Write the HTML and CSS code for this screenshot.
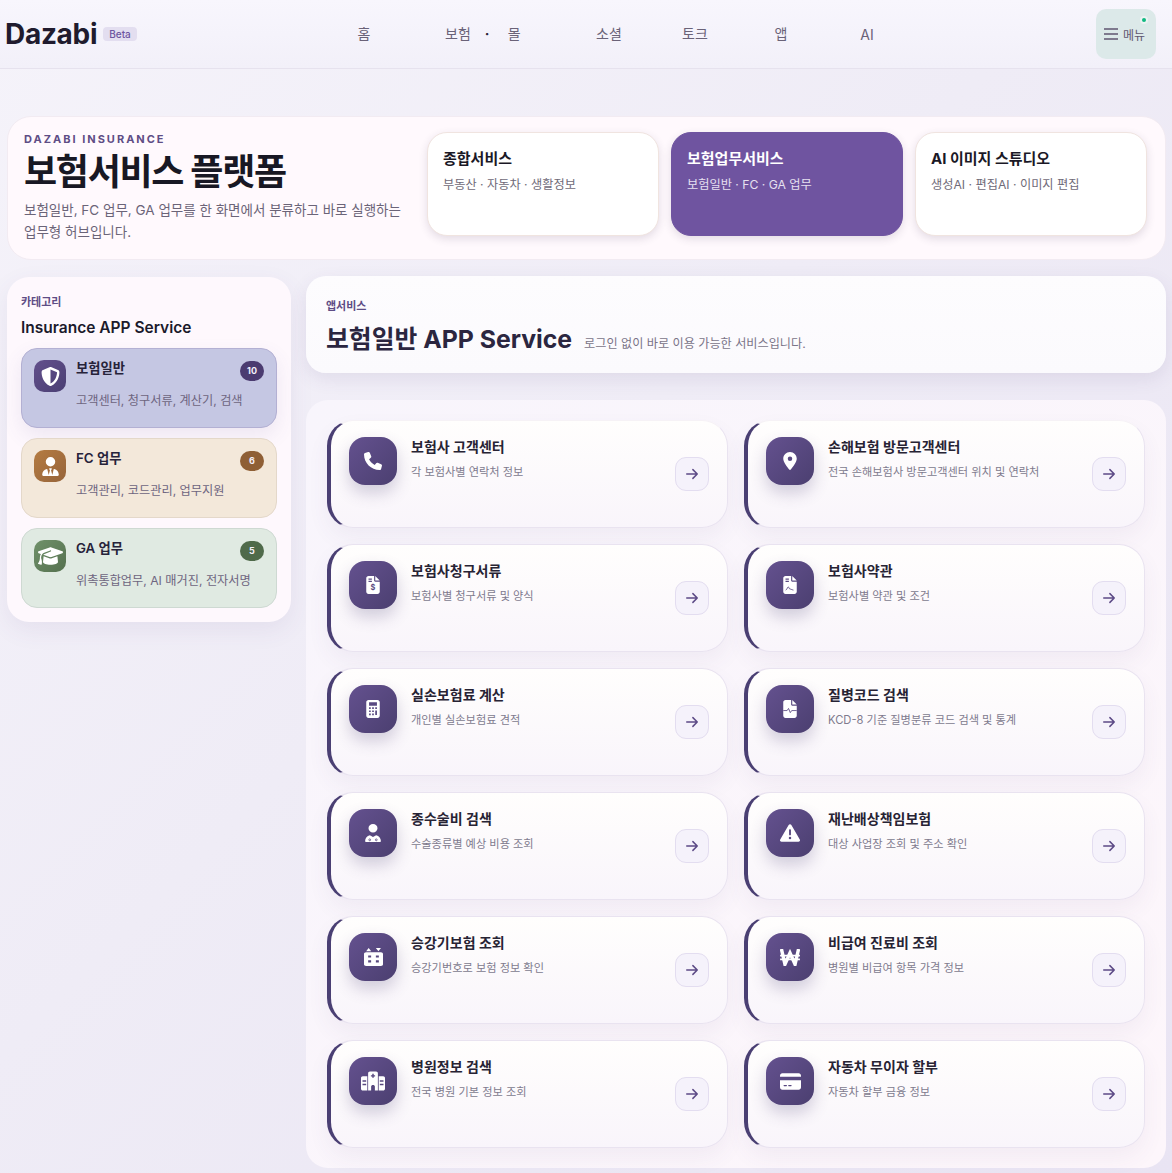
FILE: index.html
```html
<!DOCTYPE html>
<html lang="ko">

<head>
    <meta charset="UTF-8">
    <meta name="viewport" content="width=device-width, initial-scale=1.0">
    <title>Dazabi 보험서비스 플랫폼</title>
    <link rel="stylesheet" href="styles.css">
</head>

<body>
    <svg class="sprite" aria-hidden="true">
        <symbol id="arrow" viewBox="0 0 16 16">
            <path d="M2 8h12M9 3l5 5-5 5" fill="none" stroke="currentColor" stroke-width="1.7" stroke-linecap="round" stroke-linejoin="round"/>
        </symbol>
    </svg>

    <div class="header">
        <div class="brand">
            <span class="logo">Dazabi</span>
            <span class="beta">Beta</span>
        </div>
        <div class="nav">
            <a href="#">홈</a>
            <a href="#" class="nav-double"><span>보험</span><b>·</b><span>몰</span></a>
            <a href="#">소셜</a>
            <a href="#">토크</a>
            <a href="#">앱</a>
            <a href="#" class="nav-ai">AI</a>
        </div>
        <button class="menu-btn">
            <i class="dot"></i>
            <svg class="burger" viewBox="0 0 14 12"><path d="M0 1h14M0 6h14M0 11h14" stroke="currentColor" stroke-width="1.6"/></svg>
            <span>메뉴</span>
        </button>
    </div>

    <div class="page">
        <div class="hero">
            <div class="hero-text">
                <div class="eyebrow">DAZABI INSURANCE</div>
                <h1>보험서비스 플랫폼</h1>
                <p>보험일반, FC 업무, GA 업무를 한 화면에서 분류하고 바로 실행하는 업무형 허브입니다.</p>
            </div>
            <div class="hero-cards">
                <a href="#" class="hero-card">
                    <h3>종합서비스</h3>
                    <p>부동산 · 자동차 · 생활정보</p>
                </a>
                <a href="#" class="hero-card active">
                    <h3>보험업무서비스</h3>
                    <p>보험일반 · FC · GA 업무</p>
                </a>
                <a href="#" class="hero-card">
                    <h3>AI 이미지 스튜디오</h3>
                    <p>생성AI · 편집AI · 이미지 편집</p>
                </a>
            </div>
        </div>

        <div class="content">
            <div class="sidebar">
                <div class="side-label">카테고리</div>
                <h2>Insurance APP Service</h2>

                <a href="#" class="cat cat-blue">
                    <div class="cat-icon">
                        <svg class="ic-side" viewBox="0 0 512 512"><path d="M256 0c4.6 0 9.2 1 13.4 2.9L457.7 82.8c22 9.3 38.4 31 38.3 57.2c-.5 99.2-41.3 280.7-213.6 363.2c-16.7 8-36.1 8-52.8 0C57.3 420.7 16.5 239.2 16 140c-.1-26.2 16.3-47.9 38.3-57.2L242.7 2.9C246.8 1 251.4 0 256 0zm0 66.8V444.8C394 378 431.1 230.1 432 141.4L256 66.8z"/></svg>
                    </div>
                    <div class="cat-body">
                        <div class="cat-top"><strong>보험일반</strong><span class="count">10</span></div>
                        <p>고객센터, 청구서류, 계산기, 검색</p>
                    </div>
                </a>
                <a href="#" class="cat cat-sand">
                    <div class="cat-icon">
                        <svg class="ic-side" viewBox="0 0 448 512"><path d="M96 128a128 128 0 1 0 256 0A128 128 0 1 0 96 128zm94.500 200.200l18.600 31L175.800 483.100l-36-146.900c-2-8.100-9.800-13.400-17.900-11.300C51.900 342.400 0 405.800 0 481.300c0 17 13.800 30.700 30.700 30.700H417.300c17 0 30.700-13.800 30.700-30.700c0-75.500-51.900-138.900-121.900-156.400c-8.100-2-15.900 3.300-17.900 11.300l-36 146.900L238.900 359.200l18.600-31c6.400-10.700-1.300-24.200-13.700-24.200H204.300c-12.400 0-20.100 13.600-13.700 24.200z"/></svg>
                    </div>
                    <div class="cat-body">
                        <div class="cat-top"><strong>FC 업무</strong><span class="count">6</span></div>
                        <p>고객관리, 코드관리, 업무지원</p>
                    </div>
                </a>
                <a href="#" class="cat cat-green">
                    <div class="cat-icon">
                        <svg class="ic-cap" viewBox="0 0 640 512"><path d="M320 32c-8.100 0-16.100 1.400-23.700 4.100L15.800 137.400C6.300 140.900 0 149.900 0 160s6.300 19.100 15.800 22.600l57.900 20.900C57.300 229.300 48 259.800 48 291.900v28.100c0 28.400-10.800 57.700-22.300 80.800c-6.500 13-13.900 25.800-22.500 37.600C0 442.700-.9 448.300 .9 453.400s6 8.900 11.200 10.200l64 16c4.200 1.100 8.700 .3 12.400-2s6.300-6.100 7.100-10.400c8.600-42.800 4.300-81.200-2.100-108.700C90.300 344.300 86 329.800 80 316.500V291.900c0-30.200 10.200-58.700 27.900-81.500c12.900-15.500 29.600-28 49.200-35.700l157-61.700c8.200-3.200 17.500 .8 20.700 9s-.8 17.500-9 20.700l-157 61.700c-12.400 4.900-23.300 12.400-32.200 21.600l159.600 57.600c7.600 2.700 15.600 4.100 23.700 4.100s16.100-1.400 23.700-4.100L624.200 182.600c9.500-3.400 15.800-12.500 15.800-22.600s-6.300-19.100-15.800-22.600L343.700 36.100C336.100 33.400 328.100 32 320 32zM128 408c0 35.300 86 72 192 72s192-36.700 192-72L496.700 262.600 354.500 314c-11.100 4-22.800 6-34.500 6s-23.500-2-34.500-6L143.300 262.600 128 408z"/></svg>
                    </div>
                    <div class="cat-body">
                        <div class="cat-top"><strong>GA 업무</strong><span class="count">5</span></div>
                        <p>위촉통합업무, AI 매거진, 전자서명</p>
                    </div>
                </a>
            </div>

            <div class="main">
                <div class="main-head">
                    <div class="side-label">앱서비스</div>
                    <div class="main-title">
                        <h2>보험일반 APP Service</h2>
                        <span>로그인 없이 바로 이용 가능한 서비스입니다.</span>
                    </div>
                </div>

                <div class="app-grid">
                    <a href="#" class="app">
                        <div class="app-icon"><svg class="ic" viewBox="0 0 512 512"><path d="M164.900 24.600c-7.700-18.600-28-28.500-47.400-23.200l-88 24C12.100 30.200 0 46 0 64C0 311.400 200.600 512 448 512c18 0 33.800-12.100 38.600-29.500l24-88c5.300-19.400-4.600-39.700-23.200-47.400l-96-40c-16.300-6.800-35.200-2.100-46.300 11.600L304.700 368C234.300 334.700 177.300 277.700 144 207.300L193.300 167c13.700-11.200 18.400-30 11.600-46.300l-40-96z"/></svg></div>
                        <div class="app-text"><h3>보험사 고객센터</h3><p>각 보험사별 연락처 정보</p></div>
                        <span class="go"><svg><use href="#arrow"/></svg></span>
                    </a>
                    <a href="#" class="app">
                        <div class="app-icon"><svg class="ic" viewBox="0 0 384 512"><path d="M215.700 499.200C267 435 384 279.400 384 192C384 86 298 0 192 0S0 86 0 192c0 87.400 117 243 168.300 307.200c12.300 15.300 35.100 15.300 47.400 0zM192 128a64 64 0 1 1 0 128 64 64 0 1 1 0-128z"/></svg></div>
                        <div class="app-text"><h3>손해보험 방문고객센터</h3><p>전국 손해보험사 방문고객센터 위치 및 연락처</p></div>
                        <span class="go"><svg><use href="#arrow"/></svg></span>
                    </a>
                    <a href="#" class="app">
                        <div class="app-icon"><svg class="ic" viewBox="0 0 384 512"><path d="M64 0C28.700 0 0 28.700 0 64V448c0 35.300 28.700 64 64 64H320c35.300 0 64-28.700 64-64V160H256c-17.700 0-32-14.300-32-32V0H64zM256 0V128H384L256 0z"/><path d="M64 72h96v32H64zM64 136h96v32H64z" fill="#5b4a82"/><text x="192" y="410" text-anchor="middle" class="ic-text">$</text></svg></div>
                        <div class="app-text"><h3>보험사청구서류</h3><p>보험사별 청구서류 및 양식</p></div>
                        <span class="go"><svg><use href="#arrow"/></svg></span>
                    </a>
                    <a href="#" class="app">
                        <div class="app-icon"><svg class="ic" viewBox="0 0 384 512"><path d="M64 0C28.700 0 0 28.700 0 64V448c0 35.300 28.700 64 64 64H320c35.300 0 64-28.700 64-64V160H256c-17.700 0-32-14.300-32-32V0H64zM256 0V128H384L256 0z"/><path d="M64 72h96v32H64zM64 136h96v32H64z" fill="#5b4a82"/><path d="M70 400c40-10 50-90 70-90s30 60 50 60 50 20 100 30" fill="none" stroke="#5b4a82" stroke-width="26"/></svg></div>
                        <div class="app-text"><h3>보험사약관</h3><p>보험사별 약관 및 조건</p></div>
                        <span class="go"><svg><use href="#arrow"/></svg></span>
                    </a>
                    <a href="#" class="app">
                        <div class="app-icon"><svg class="ic" viewBox="0 0 384 512"><path fill-rule="evenodd" d="M64 0H320c35.300 0 64 28.700 64 64V448c0 35.300-28.700 64-64 64H64c-35.300 0-64-28.700-64-64V64C0 28.700 28.700 0 64 0zM80 64v96H304V64H80zM80 208v48h48v-48H80zm88 0v48h48v-48h-48zm88 0v48h48v-48h-48zM80 296v48h48v-48H80zm88 0v48h48v-48h-48zm88 0v128h48V296h-48zM80 384v48h48v-48H80zm88 0v48h48v-48h-48z"/></svg></div>
                        <div class="app-text"><h3>실손보험료 계산</h3><p>개인별 실손보험료 견적</p></div>
                        <span class="go"><svg><use href="#arrow"/></svg></span>
                    </a>
                    <a href="#" class="app">
                        <div class="app-icon"><svg class="ic" viewBox="0 0 384 512"><path d="M64 0C28.700 0 0 28.700 0 64V448c0 35.300 28.700 64 64 64H320c35.300 0 64-28.700 64-64V160H256c-17.700 0-32-14.300-32-32V0H64zM256 0V128H384L256 0z"/><path d="M0 300h110l40-60 50 120 40-60h144" fill="none" stroke="#5b4a82" stroke-width="24"/></svg></div>
                        <div class="app-text"><h3>질병코드 검색</h3><p>KCD-8 기준 질병분류 코드 검색 및 통계</p></div>
                        <span class="go"><svg><use href="#arrow"/></svg></span>
                    </a>
                    <a href="#" class="app">
                        <div class="app-icon"><svg class="ic" viewBox="0 0 448 512"><path d="M96 120a128 120 0 1 0 256 0A128 120 0 1 0 96 120zM30 512c-17 0-30-14-30-31 0-80 58-146 134-160l90 50 90-50c76 14 134 80 134 160 0 17-13 31-30 31z"/><circle cx="130" cy="450" r="26" fill="none" stroke="#5b4a82" stroke-width="22"/><circle cx="318" cy="450" r="26" fill="none" stroke="#5b4a82" stroke-width="22"/></svg></div>
                        <div class="app-text"><h3>종수술비 검색</h3><p>수술종류별 예상 비용 조회</p></div>
                        <span class="go"><svg><use href="#arrow"/></svg></span>
                    </a>
                    <a href="#" class="app">
                        <div class="app-icon"><svg class="ic-warn" viewBox="0 0 512 512"><path d="M256 32c14.200 0 27.300 7.500 34.500 19.800l216 368c7.300 12.400 7.300 27.700 .2 40.100S486.300 480 472 480H40c-14.300 0-27.600-7.700-34.700-20.100s-7-27.800 .2-40.100l216-368C228.700 39.500 241.800 32 256 32zm0 128c-13.300 0-24 10.700-24 24V296c0 13.300 10.700 24 24 24s24-10.700 24-24V184c0-13.300-10.700-24-24-24zm32 224a32 32 0 1 0 -64 0 32 32 0 1 0 64 0z"/></svg></div>
                        <div class="app-text"><h3>재난배상책임보험</h3><p>대상 사업장 조회 및 주소 확인</p></div>
                        <span class="go"><svg><use href="#arrow"/></svg></span>
                    </a>
                    <a href="#" class="app">
                        <div class="app-icon"><svg class="ic-lift" viewBox="0 0 448 512" preserveAspectRatio="none"><path d="M110 0l60 90H50zM280 0h120l-60 90z"/><path fill-rule="evenodd" d="M48 120h352c27 0 48 21 48 48v296c0 27-21 48-48 48H48c-27 0-48-21-48-48V168c0-27 21-48 48-48zm50 90v60h70v-60H98zm182 0v60h70v-60h-70zM98 350v60h70v-60H98zm182 0v60h70v-60h-70z"/></svg></div>
                        <div class="app-text"><h3>승강기보험 조회</h3><p>승강기번호로 보험 정보 확인</p></div>
                        <span class="go"><svg><use href="#arrow"/></svg></span>
                    </a>
                    <a href="#" class="app">
                        <div class="app-icon"><svg class="ic-won" viewBox="0 0 448 384"><path d="M30 0l80 345L224 90l114 255L418 0" fill="none" stroke="currentColor" stroke-width="78"/><path d="M0 150h448M0 235h448" fill="none" stroke="currentColor" stroke-width="36"/></svg></div>
                        <div class="app-text"><h3>비급여 진료비 조회</h3><p>병원별 비급여 항목 가격 정보</p></div>
                        <span class="go"><svg><use href="#arrow"/></svg></span>
                    </a>
                    <a href="#" class="app">
                        <div class="app-icon"><svg class="ic-hosp" viewBox="0 0 640 512"><path fill-rule="evenodd" d="M190 48c0-26 22-48 48-48h164c26 0 48 22 48 48v464H370V400c0-22-22-40-50-40s-50 18-50 40v112H190V48zM300 64v36h-36v36h36v36h40v-36h36v-36h-36V64h-40zM0 176c0-26 22-48 48-48h120v384H48c-26 0-48-22-48-48V176zm40 60v40h98v-40H40zm0 90v40h98v-40H40zM472 128h120c26 0 48 22 48 48v288c0 26-22 48-48 48H472V128zm30 108v40h98v-40h-98zm0 90v40h98v-40h-98z"/></svg></div>
                        <div class="app-text"><h3>병원정보 검색</h3><p>전국 병원 기본 정보 조회</p></div>
                        <span class="go"><svg><use href="#arrow"/></svg></span>
                    </a>
                    <a href="#" class="app">
                        <div class="app-icon"><svg class="ic-wide" viewBox="0 0 576 512"><path fill-rule="evenodd" d="M64 32C28.700 32 0 60.700 0 96v32H576V96c0-35.300-28.700-64-64-64H64zM576 224H0V416c0 35.300 28.700 64 64 64H512c35.300 0 64-28.700 64-64V224zM112 352h64c8.800 0 16 7.200 16 16s-7.200 16-16 16H112c-8.800 0-16-7.200-16-16s7.200-16 16-16zm112 16c0-8.800 7.200-16 16-16h64c8.800 0 16 7.200 16 16s-7.200 16-16 16H240c-8.800 0-16-7.200-16-16z"/></svg></div>
                        <div class="app-text"><h3>자동차 무이자 할부</h3><p>자동차 할부 금융 정보</p></div>
                        <span class="go"><svg><use href="#arrow"/></svg></span>
                    </a>
                </div>
            </div>
        </div>
    </div>
</body>

</html>
```

FILE: styles.css
```css
/* Reset */
body,
h1,
h2,
h3,
p {
    margin: 0;
    padding: 0;
}

* {
    box-sizing: border-box;
}

body {
    font-family: Inter, 'Noto Sans CJK KR', sans-serif;
    color: #1e1a2e;
    background: linear-gradient(135deg, #f5f3fa 0%, #efecf6 45%, #e9e4f3 100%);
    min-height: 1173px;
}

a {
    color: inherit;
    text-decoration: none;
}

.sprite {
    display: none;
}

/* Header */
.header {
    display: flex;
    align-items: center;
    height: 69px;
    padding: 0 16px 0 5px;
    background: linear-gradient(180deg, #f8f6fd, #f2f0f9);
    border-bottom: 1px solid #e6e2ee;
}

.brand {
    display: flex;
    align-items: center;
    gap: 6px;
    width: 316px;
}

.logo {
    font-size: 28px;
    font-weight: 700;
    letter-spacing: -0.3px;
    color: #201b2e;
}

.beta {
    padding: 1px 6px;
    font-size: 10px;
    font-weight: 500;
    line-height: 12px;
    color: #6d55a0;
    background: #e3def0;
    border-radius: 4px;
}

.nav {
    display: flex;
    align-items: center;
    padding-bottom: 2px;
    font-size: 14px;
    color: #6a6278;
}

.nav a {
    width: 86px;
    text-align: center;
}

.nav .nav-double {
    display: flex;
    gap: 14px;
    width: 159px;
    padding-left: 38px;
    text-align: left;
}

.nav .nav-ai {
    padding-top: 2px;
}

.nav-double b {
    width: 6px;
    margin-right: 3px;
    padding-top: 2px;
    color: #2a2438;
}

.menu-btn {
    position: relative;
    display: flex;
    align-items: center;
    gap: 5px;
    width: 60px;
    height: 50px;
    margin-left: auto;
    padding: 0 0 0 8px;
    font-family: inherit;
    font-size: 12px;
    color: #5f5670;
    background: #dce9e9;
    border: 0;
    border-radius: 10px;
}

.burger {
    width: 14px;
    height: 12px;
}

.dot {
    position: absolute;
    top: 9px;
    right: 10px;
    width: 4px;
    height: 4px;
    background: #10b981;
    border-radius: 50%;
    box-shadow: 0 0 0 2px rgba(255, 255, 255, 0.45);
}

/* Page */
.page {
    padding: 47px 6px 5px 7px;
}

.hero {
    display: flex;
    justify-content: space-between;
    height: 144px;
    padding: 15px 18px 0 16px;
    background: #fff9fd;
    border: 1px solid #f2ebf2;
    border-radius: 24px;
}

.hero-text {
    width: 386px;
}

.eyebrow {
    font-size: 11px;
    font-weight: 700;
    line-height: 14px;
    letter-spacing: 2px;
    color: #5e4d85;
}

.hero-text h1 {
    margin-top: 2px;
    font-size: 36px;
    font-weight: 700;
    line-height: 48px;
    letter-spacing: -1.3px;
    color: #181824;
}

.hero-text p {
    margin-top: 4px;
    font-size: 13.5px;
    line-height: 21.5px;
    color: #6b6478;
}

.hero-cards {
    display: flex;
    gap: 12px;
}

.hero-card {
    width: 232px;
    height: 104px;
    padding: 16px 15px;
    background: #fff;
    border: 1px solid #f0e4e0;
    border-radius: 20px;
    box-shadow: 0 3px 8px rgba(60, 40, 80, 0.14);
}

.hero-card h3 {
    font-size: 15px;
    font-weight: 700;
    line-height: 20px;
    color: #1a1826;
}

.hero-card p {
    margin-top: 8px;
    font-size: 12.2px;
    line-height: 16px;
    color: #6f6a78;
}

.hero-card.active {
    background: #6f54a0;
    border-color: #6f54a0;
}

.hero-card.active h3 {
    color: #fff;
}

.hero-card.active p {
    color: #e6e0f0;
}

/* Content */
.content {
    display: grid;
    grid-template-columns: 284px 860px;
    gap: 15px;
    align-items: start;
    margin-top: 16px;
}

.sidebar {
    margin-top: 1px;
    padding: 17px 14px 14px;
    background: #fef8fd;
    border-radius: 22px;
    box-shadow: 0 8px 24px rgba(90, 70, 130, 0.08);
}

.side-label {
    font-size: 11px;
    font-weight: 600;
    line-height: 16px;
    color: #5e4d85;
}

.sidebar h2 {
    margin-top: 8px;
    font-size: 15.5px;
    font-weight: 600;
    line-height: 20px;
    color: #1b1a2b;
}

.cat {
    display: flex;
    gap: 10px;
    height: 80px;
    margin-top: 10px;
    padding: 11px 12px;
    border: 1px solid;
    border-radius: 16px;
}

.cat-blue {
    background: #c5c7e3;
    border-color: #b3b0d3;
    box-shadow: 0 8px 20px rgba(90, 80, 150, 0.1);
}

.cat-sand {
    background: #f3e8da;
    border-color: #e4d8ca;
}

.cat-green {
    background: #e0eae2;
    border-color: #ced9d2;
}

.cat-icon {
    display: flex;
    flex: none;
    align-items: center;
    justify-content: center;
    width: 32px;
    height: 32px;
    fill: #fff;
    border-radius: 10px;
}

.cat-blue .cat-icon {
    background: linear-gradient(135deg, #63508c, #4a3f73);
}

.cat-sand .cat-icon {
    background: linear-gradient(135deg, #b57c42, #96643a);
}

.cat-green .cat-icon {
    background: linear-gradient(135deg, #70916a, #55714f);
}

.ic-side {
    width: 19px;
    height: 19px;
}

.ic-cap {
    width: 25px;
    height: 20px;
}

.cat-body {
    flex: 1;
}

.cat-top {
    display: flex;
    align-items: flex-start;
    justify-content: space-between;
    height: 30px;
}

.cat-top strong {
    font-size: 13.3px;
    font-weight: 600;
    line-height: 17px;
    color: #27233a;
}

.count {
    width: 24px;
    height: 20px;
    margin-top: 1px;
    font-size: 9px;
    font-weight: 700;
    line-height: 20px;
    text-align: center;
    color: #f5f0fa;
    background: #4b3b70;
    border-radius: 10px;
}

.cat-sand .count {
    background: #8f5f35;
}

.cat-green .count {
    background: #4f6a4a;
}

.cat-body p {
    margin-top: 3px;
    font-size: 12.2px;
    line-height: 16px;
    color: #6e6580;
}

.main-head {
    height: 97px;
    padding: 22px 20px;
    background: linear-gradient(180deg, #fdfcfe, #fbfafd);
    border-radius: 20px;
    box-shadow: 0 6px 18px rgba(80, 60, 120, 0.1);
}

.main-title {
    display: flex;
    align-items: baseline;
    gap: 12px;
    margin-top: 7px;
}

.main-title h2 {
    font-size: 24.8px;
    font-weight: 700;
    line-height: 36px;
    color: #2b2640;
}

.main-title span {
    font-size: 12.15px;
    color: #7a7488;
}

.app-grid {
    display: grid;
    grid-template-columns: 401px 401px;
    gap: 16px;
    margin-top: 27px;
    padding: 20px 21px;
    background: linear-gradient(135deg, #f8f5fc, #fdf6fb);
    border-radius: 22px;
}

.app {
    display: flex;
    gap: 14px;
    height: 108px;
    padding: 16px 18px;
    background: linear-gradient(180deg, #fffefd, #f9f5fb);
    border: 1px solid #e9e3f0;
    border-left: 4px solid #4a3f73;
    border-radius: 26px;
    box-shadow: 0 10px 22px rgba(80, 60, 120, 0.06);
}

.app:nth-child(-n+2) {
    border-top-color: #f6f2f6;
}

.app-icon {
    display: flex;
    flex: none;
    align-items: center;
    justify-content: center;
    width: 48px;
    height: 48px;
    fill: #fff;
    color: #fff;
    background: linear-gradient(135deg, #64518f, #4b3f70);
    border-radius: 16px;
    box-shadow: 0 8px 16px rgba(74, 63, 115, 0.24);
}

.ic {
    width: 18px;
    height: 18px;
}

.ic-warn {
    width: 20px;
    height: 20px;
}

.ic-lift {
    width: 19px;
    height: 18px;
}

.ic-won {
    width: 20px;
    height: 17px;
}

.ic-wide {
    width: 21px;
    height: 21px;
}

.ic-hosp {
    width: 24px;
    height: 20px;
}

.ic-text {
    font-family: Inter, sans-serif;
    font-size: 210px;
    font-weight: 700;
    fill: #5b4a82;
}

.app-text {
    flex: 1;
    min-width: 0;
}

.app-text h3 {
    font-size: 14px;
    font-weight: 700;
    line-height: 20px;
    letter-spacing: 0.03px;
    color: #272334;
}

.app-text p {
    margin-top: 7px;
    font-size: 11.2px;
    line-height: 16px;
    color: #807a8e;
}

.go {
    display: flex;
    flex: none;
    align-items: center;
    justify-content: center;
    width: 34px;
    height: 34px;
    margin-top: 20px;
    color: #5c4a86;
    background: #f5f2fb;
    border: 1px solid #e3ddf0;
    border-radius: 11px;
}

.go svg {
    width: 14px;
    height: 14px;
}
```
